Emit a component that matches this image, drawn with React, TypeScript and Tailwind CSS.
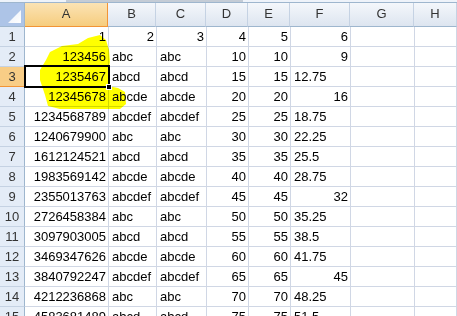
import React from "react";

type Val = string | number;

const COLS = [
  { k: "A", w: "w-[84px]" },
  { k: "B", w: "w-[48px]" },
  { k: "C", w: "w-[50px]" },
  { k: "D", w: "w-[42px]" },
  { k: "E", w: "w-[42px]" },
  { k: "F", w: "w-[60px]" },
  { k: "G", w: "w-[64px]" },
  { k: "H", w: "flex-1" },
];

const ROWS: Val[][] = [
  [1, 2, 3, 4, 5, 6],
  [123456, "abc", "abc", 10, 10, 9],
  [1235467, "abcd", "abcd", 15, 15, "12.75"],
  [12345678, "abcde", "abcde", 20, 20, 16],
  [1234568789, "abcdef", "abcdef", 25, 25, "18.75"],
  [1240679900, "abc", "abc", 30, 30, "22.25"],
  [1612124521, "abcd", "abcd", 35, 35, "25.5"],
  [1983569142, "abcde", "abcde", 40, 40, "28.75"],
  [2355013763, "abcdef", "abcdef", 45, 45, 32],
  [2726458384, "abc", "abc", 50, 50, "35.25"],
  [3097903005, "abcd", "abcd", 55, 55, "38.5"],
  [3469347626, "abcde", "abcde", 60, 60, "41.75"],
  [3840792247, "abcdef", "abcdef", 65, 65, 45],
  [4212236868, "abc", "abc", 70, 70, "48.25"],
  [4583681489, "abcd", "abcd", 75, 75, "51.5"],
];

export default function App() {
  return (
    <div className="relative h-[316px] w-[457px] overflow-hidden bg-white font-['Liberation_Sans',Arial,sans-serif] text-[13px] text-black">
      {/* strip left over from the ribbon above */}
      <div className="flex h-[2px] bg-[#eef3fa]">
        <div className="ml-[66px] w-[177px] bg-[#c4ccd6]" />
      </div>
      <div className="h-px bg-[#9eb6ce]" />

      {/* column headers */}
      <div className="flex h-[24px]">
        <div className="relative w-[25px] shrink-0 border-r border-b border-[#9eb6ce] bg-[#adc4e7]">
          <svg className="absolute left-0 top-0" width="24" height="23">
            <defs>
              <linearGradient id="tri" x1="0" y1="0" x2="1" y2="1">
                <stop offset="0" stopColor="#e9eff8" />
                <stop offset="1" stopColor="#ffffff" />
              </linearGradient>
            </defs>
            <polygon points="21,7 21,20 8,20" fill="url(#tri)" />
          </svg>
        </div>
        {COLS.map((c, i) => (
          <div
            key={c.k}
            className={`${c.w} shrink-0 border-r border-b text-center leading-[22px] ${
              i === 0
                ? "border-b-[#f29436] border-r-[#f29436] border-l border-l-[#f29436] -ml-px bg-gradient-to-b from-[#fbe3b4] to-[#f6cd7e] text-[#333]"
                : "border-r-[#c5d2e3] border-b-[#9eb6ce] bg-gradient-to-b from-[#f4f7fb] to-[#dde5f0] text-[#333]"
            }`}
          >
            {c.k}
          </div>
        ))}
      </div>

      {/* rows */}
      {ROWS.map((row, r) => (
        <div key={r} className="flex h-[20px]">
          <div
            className={`w-[25px] shrink-0 border-r border-b text-center leading-[19px] text-[#333] ${
              r === 2
                ? "border-r-[#f29436] border-b-[#f29436] bg-[#f8cd86]"
                : "border-r-[#9eb6ce] border-b-[#c5d2e3] bg-[#e4ecf7]"
            }`}
          >
            {r + 1}
          </div>
          {COLS.map((c, i) => {
            const v = row[i];
            const num = typeof v === "number";
            return (
              <div
                key={c.k}
                className={`${c.w} shrink-0 overflow-visible whitespace-nowrap border-r border-b border-[#d0d7e5] leading-[19px] ${
                  num ? "pr-[2px] text-right" : "pl-[3px] text-left"
                }`}
              >
                {v ?? ""}
              </div>
            );
          })}
        </div>
      ))}

      {/* hand-drawn yellow marker over A1:A4 */}
      <svg
        className="pointer-events-none absolute left-0 top-0 mix-blend-multiply"
        width="457"
        height="316"
      >
        <polygon
          points="78,44 88,38 100,35 106,40 109,50 110,62 108,72 108,86 118,88 125,92 126,104 120,109 60,109 48,106 45,95 40,80 40,70 46,60 50,52 62,46"
          fill="#ffff00"
        />
      </svg>

      {/* active cell A3 */}
      <div className="pointer-events-none absolute left-[24px] top-[65px] h-[23px] w-[86px] border-2 border-black" />
      <div className="pointer-events-none absolute left-[106px] top-[84px] h-[6px] w-[6px] border border-white bg-black" />
    </div>
  );
}
